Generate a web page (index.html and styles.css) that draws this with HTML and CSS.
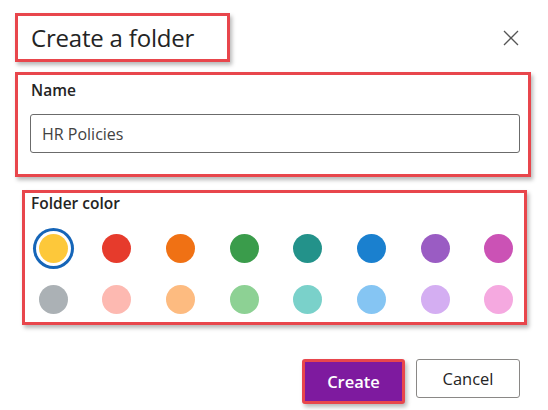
FILE: index.html
```html
<!DOCTYPE html>
<html lang="en">
<head>
<meta charset="utf-8">
<title>Create a folder</title>
<link rel="stylesheet" href="styles.css">
</head>
<body>
<div class="dialog">
  <div class="header">
    <div class="title-box"><h1 class="title">Create a folder</h1></div>
    <button class="close" aria-label="Close">
      <svg width="16" height="16" viewBox="0 0 16 16"><path d="M1 1 L15 15 M15 1 L1 15" stroke="#555" stroke-width="1.3" fill="none"/></svg>
    </button>
  </div>

  <div class="name-box">
    <label class="label" for="name">Name</label>
    <input id="name" class="input" type="text" value="HR Policies">
  </div>

  <div class="color-box">
    <div class="label label-color">Folder color</div>
    <div class="swatches">
      <span class="cell"><span class="dot selected c-yellow"></span></span>
      <span class="cell"><span class="dot c-red"></span></span>
      <span class="cell"><span class="dot c-orange"></span></span>
      <span class="cell"><span class="dot c-green"></span></span>
      <span class="cell"><span class="dot c-teal"></span></span>
      <span class="cell"><span class="dot c-blue"></span></span>
      <span class="cell"><span class="dot c-purple"></span></span>
      <span class="cell"><span class="dot c-magenta"></span></span>
      <span class="cell"><span class="dot c-gray"></span></span>
      <span class="cell"><span class="dot c-pink"></span></span>
      <span class="cell"><span class="dot c-peach"></span></span>
      <span class="cell"><span class="dot c-lgreen"></span></span>
      <span class="cell"><span class="dot c-lteal"></span></span>
      <span class="cell"><span class="dot c-lblue"></span></span>
      <span class="cell"><span class="dot c-lavender"></span></span>
      <span class="cell"><span class="dot c-lpink"></span></span>
    </div>
  </div>

  <div class="footer">
    <div class="create-wrap"><button class="btn btn-primary">Create</button></div>
    <button class="btn btn-secondary">Cancel</button>
  </div>
</div>
</body>
</html>
```

FILE: styles.css
```css
html, body {
  margin: 0;
  padding: 0;
  background: #ffffff;
}
body {
  width: 548px;
  height: 410px;
  overflow: hidden;
  font-family: "Open Sans", "Noto Sans", "Liberation Sans", sans-serif;
  color: #242424;
}
.dialog {
  display: flex;
  flex-direction: column;
}
.header {
  display: flex;
  align-items: center;
  margin: 13px 0 0 15px;
  height: 49px;
}
.title-box {
  box-sizing: border-box;
  width: 215px;
  height: 49px;
  border: 3px solid #e8464c;
  box-shadow: 2px 3px 4px rgba(0, 0, 0, 0.28);
  display: flex;
  align-items: center;
  padding-left: 13px;
}
.title {
  margin: 0;
  font-size: 24px;
  font-weight: 400;
  line-height: 30px;
  color: #242424;
  letter-spacing: -0.2px;
}
.close {
  margin-left: auto;
  margin-right: 28px;
  width: 18px;
  height: 18px;
  padding: 0;
  border: 0;
  background: transparent;
  display: flex;
  align-items: center;
  justify-content: center;
}
.name-box {
  box-sizing: border-box;
  width: 516px;
  height: 105px;
  margin: 10px 0 0 15px;
  border: 3px solid #e8464c;
  box-shadow: 2px 3px 4px rgba(0, 0, 0, 0.28);
  padding: 5px 0 0 12px;
  display: flex;
  flex-direction: column;
}
.label {
  font-size: 15.5px;
  font-weight: 600;
  line-height: 20px;
  color: #242424;
  padding-left: 1px;
}
.input {
  box-sizing: border-box;
  margin-top: 14px;
  width: 490px;
  height: 39px;
  border: 1px solid #6b6b6b;
  border-radius: 3px;
  padding: 0 11px;
  font-family: "Open Sans", "Noto Sans", "Liberation Sans", sans-serif;
  font-size: 16px;
  color: #424242;
  outline: none;
}
.color-box {
  box-sizing: border-box;
  width: 505px;
  height: 135px;
  margin: 13px 0 0 22px;
  border: 3px solid #e8464c;
  box-shadow: 2px 3px 4px rgba(0, 0, 0, 0.28);
  padding: 0 0 0 6px;
}
.label-color {
  padding-left: 0;
}
.swatches {
  display: grid;
  grid-template-columns: repeat(8, 42px);
  grid-auto-rows: 42px;
  column-gap: 21.7px;
  row-gap: 9px;
  margin: 14px 0 0 1px;
}
.cell {
  display: flex;
  align-items: center;
  justify-content: center;
}
.dot {
  width: 29px;
  height: 29px;
  border-radius: 50%;
}
.dot.selected {
  box-shadow: 0 0 0 3px #ffffff, 0 0 0 6px #1565b8;
}
.c-yellow { background: #fdc83a; }
.c-red { background: #e63b2c; }
.c-orange { background: #f07114; }
.c-green { background: #3a9c4b; }
.c-teal { background: #23928a; }
.c-blue { background: #1a80cf; }
.c-purple { background: #9a5cc3; }
.c-magenta { background: #cb52b5; }
.c-gray { background: #abb1b5; }
.c-pink { background: #fdb9b1; }
.c-peach { background: #fdbb80; }
.c-lgreen { background: #8dd194; }
.c-lteal { background: #7ad1ca; }
.c-lblue { background: #85c5f3; }
.c-lavender { background: #d4aef2; }
.c-lpink { background: #f5a9e0; }
.footer {
  display: flex;
  justify-content: flex-end;
  align-items: flex-start;
  gap: 11px;
  margin: 34px 28px 0 0;
}
.create-wrap {
  box-sizing: border-box;
  width: 103px;
  height: 45px;
  border: 3px solid #e8464c;
  border-radius: 3px;
  box-shadow: 2px 3px 4px rgba(0, 0, 0, 0.28);
  background: #7e1a9f;
  display: flex;
}
.btn {
  font-family: "Open Sans", "Noto Sans", "Liberation Sans", sans-serif;
  font-size: 16.5px;
  cursor: pointer;
}
.btn-primary {
  flex: 1;
  border: 0;
  background: #7e1a9f;
  color: #ffffff;
  font-weight: 600;
  padding: 0;
}
.btn-secondary {
  box-sizing: border-box;
  width: 104px;
  height: 39px;
  border: 1px solid #8a8886;
  border-radius: 3px;
  background: #ffffff;
  color: #242424;
  font-weight: 400;
  padding: 0;
}
```
